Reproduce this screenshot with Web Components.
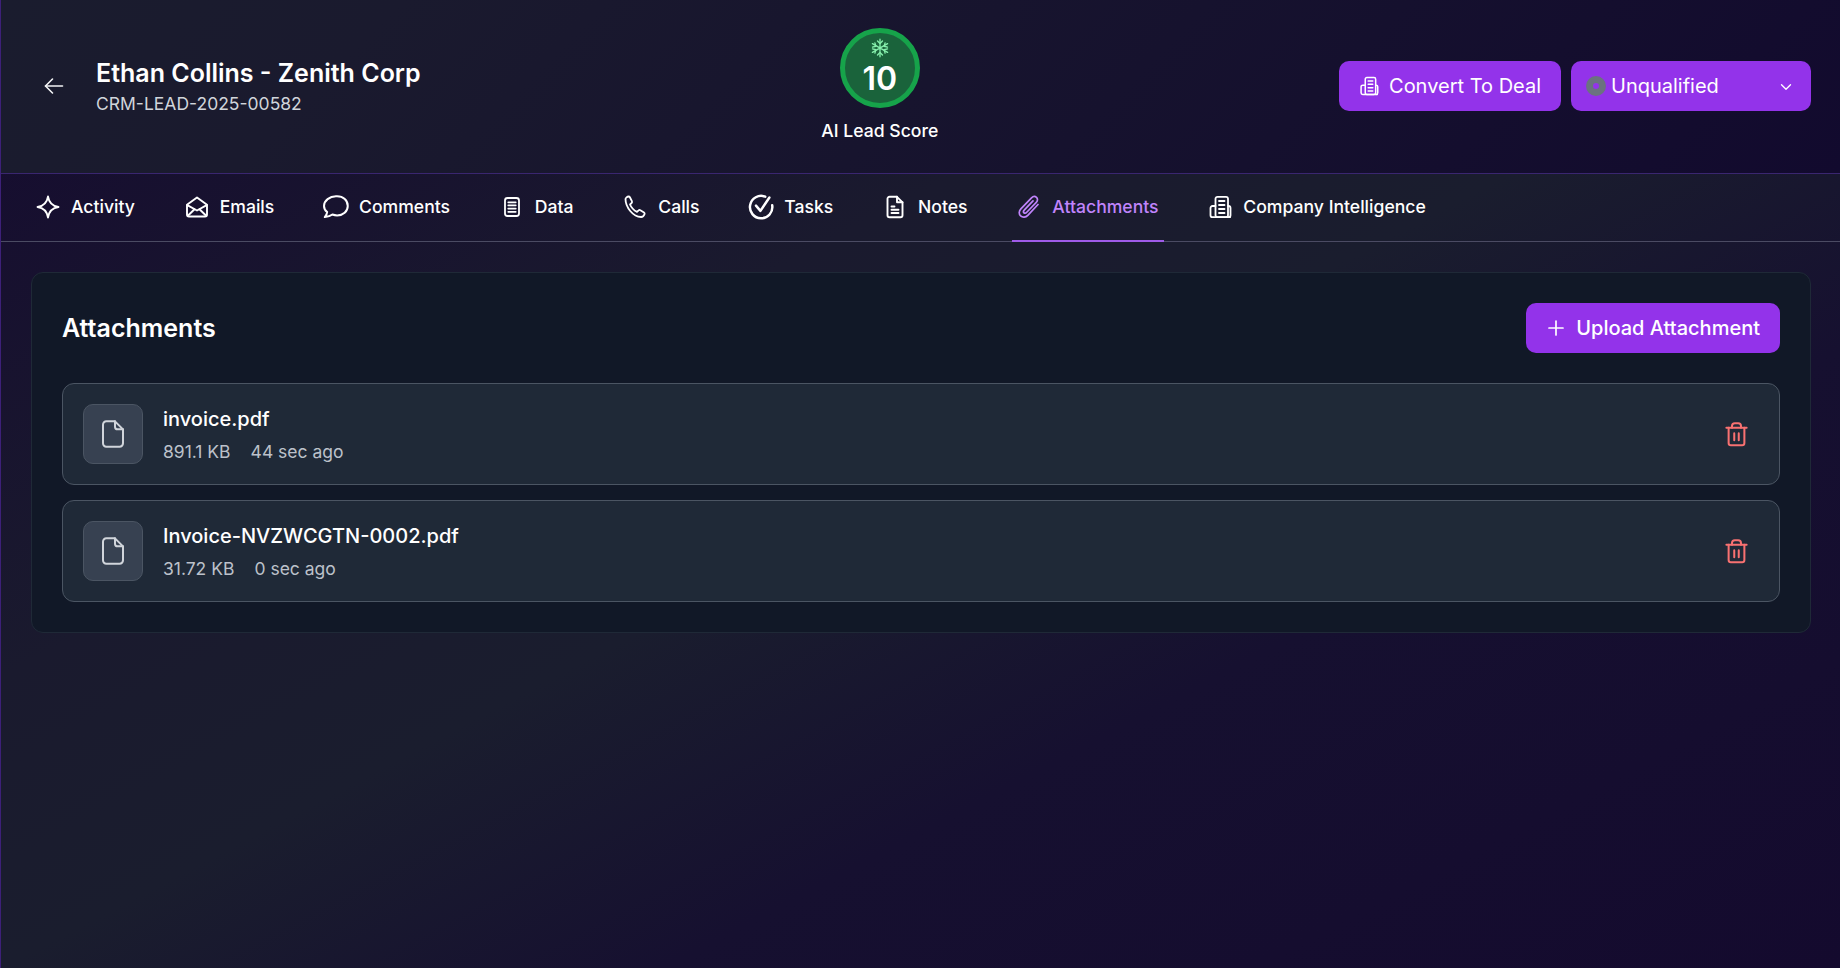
<!DOCTYPE html>
<html>
<head>
<meta charset="utf-8">
<title>Lead</title>
<style>
html, body { margin: 0; height: 100%; }
body {
    font-family: Inter, "Liberation Sans", sans-serif;
    color: #fff;
    background: linear-gradient(to bottom right, #150a30 0%, #1a1a2e 35%, #1a1d2e 50%, #161030 68%, #140a2e 100%);
}
</style>
</head>
<body>
<lead-page>
    <lead-header slot="header" name="Ethan Collins - Zenith Corp" code="CRM-LEAD-2025-00582" score="10"></lead-header>
    <tab-bar slot="tabs">
        <tab-item icon="activity">Activity</tab-item>
        <tab-item icon="mail">Emails</tab-item>
        <tab-item icon="comment">Comments</tab-item>
        <tab-item icon="data">Data</tab-item>
        <tab-item icon="phone">Calls</tab-item>
        <tab-item icon="task">Tasks</tab-item>
        <tab-item icon="note">Notes</tab-item>
        <tab-item icon="clip" active>Attachments</tab-item>
        <tab-item icon="company">Company Intelligence</tab-item>
    </tab-bar>
    <attachments-panel>
        <file-row name="invoice.pdf" size="891.1 KB" age="44 sec ago"></file-row>
        <file-row name="Invoice-NVZWCGTN-0002.pdf" size="31.72 KB" age="0 sec ago"></file-row>
    </attachments-panel>
</lead-page>

<script>
const stroke = (body, w) => `<svg viewBox="0 0 24 24" width="100%" height="100%" fill="none" stroke="currentColor" stroke-width="${w || 1.8}" stroke-linecap="round" stroke-linejoin="round">${body}</svg>`

const ICONS = {
    back: stroke('<path d="M20.500 12H3.500"/><path d="M10.500 5l-7 7 7 7"/>', 1.6),
    activity: stroke('<path d="M12 1.500c1 6.500 4 9.500 10.500 10.500-6.500 1-9.500 4-10.500 10.500-1-6.500-4-9.500-10.500-10.500 6.500-1 9.500-4 10.500-10.500z"/>', 1.8),
    mail: stroke('<path d="M2 9.800L12 2.500l10 7.300V19.500a2 2 0 0 1-2 2H4a2 2 0 0 1-2-2z"/><path d="M2.300 10.200L12 15.500l9.700-5.300"/><path d="M2.800 20.800l6.700-6.500M21.200 20.800l-6.700-6.500"/>', 1.9),
    comment: stroke('<path d="M13 2.500c5.500 0 9.500 3.700 9.500 8.500s-4.200 8.500-9.500 8.500c-1.500 0-2.900-.3-4.200-.8-1.800 1.400-4 2-6.800 2.300 1.300-1.500 2-2.900 2.100-4.500-1.800-1.500-2.800-3.500-2.800-5.500 0-4.800 5-8.500 10.700-8.500z"/>', 1.8),
    data: stroke('<rect x="5" y="3" width="14" height="18" rx="2.500"/><path d="M8.300 7.300h7.400M8.300 10.300h7.400M8.300 13.600h7.400M8.300 16.800h7.400"/>', 1.8),
    phone: stroke('<path d="M2.500 4c0-1 1.800-2.500 3-2.500.7 0 1.200.4 1.500 1l1.900 3.700c.3.600.2 1.300-.3 1.800L7 9.500c1.300 3 3.900 5.900 7 7.400l1.600-1.500c.5-.5 1.200-.6 1.800-.2l3.600 2.200c.6.400.8 1 .6 1.600-.5 1.500-1.900 3-3.500 3C10 22 2.500 12 2.500 4z"/>', 1.8),
    task: stroke('<path d="M15.800 2.800A10 10 0 1 0 22 10.500"/><path d="M7.500 10.800l4 4.700L19.500 3.500"/>', 2.200),
    note: stroke('<path d="M14 1.800H6.500A2 2 0 0 0 4.500 3.800v16.400a2 2 0 0 0 2 2h11a2 2 0 0 0 2-2V7.300z"/><path d="M14 1.800v5.500h5.500"/><path d="M8.500 11.500h3M8.500 14.800h7M8.500 18h7"/>', 1.9),
    clip: stroke('<path d="M21 9.500L10.800 20.300c-2.100 2.200-5.300 2.300-7.200.5-1.900-1.800-1.800-4.800.3-7L14.500 2.800c1.500-1.500 3.700-1.600 5-.4 1.400 1.300 1.300 3.500-.2 5L9.500 17.500c-.8.800-1.900.9-2.500.3-.7-.7-.6-1.800.2-2.600L16 5.900"/>', 1.7),
    company: stroke('<rect x="7.500" y="1.800" width="12.500" height="20.400" rx="2"/><path d="M7.500 11H4.500a2 2 0 0 0-2 2v7.200a2 2 0 0 0 2 2H22"/><path d="M11 6h5.500M11 10h5.500M11 14h5.500M11 18h5.500"/><path d="M20 11h.5a2 2 0 0 1 2 2v7.200a2 2 0 0 1-2 2"/>', 1.8),
    plus: stroke('<path d="M12 5v14M5 12h14"/>', 1.7),
    file: stroke('<path d="M13.500 2.500H7A2.500 2.500 0 0 0 4.500 5v14A2.500 2.500 0 0 0 7 21.500h10a2.500 2.500 0 0 0 2.500-2.500V8.500z"/><path d="M13.500 2.500v4a2 2 0 0 0 2 2h4"/>', 1.5),
    trash: stroke('<path d="M3 6h18"/><path d="M5 6v13.500A2 2 0 0 0 7 21.500h10a2 2 0 0 0 2-2V6"/><path d="M8 6V4.500A2.500 2.500 0 0 1 10.500 2h3A2.500 2.500 0 0 1 16 4.500V6"/><path d="M10 11v6M14 11v6"/>', 1.8),
    chevron: stroke('<path d="M6 9l6 6 6-6"/>', 1.8),
    snow: stroke('<path d="M12 1.500v21M2.900 6.800l18.200 10.400M21.100 6.800L2.900 17.200"/><path d="M9 3.500L12 6.500l3-3M9 20.500L12 17.500l3 3M3 11l4-1.100-1.100-4M21 13l-4 1.100 1.100 4M21 11l-4-1.100 1.100-4M3 13l4 1.100-1.100 4"/>', 1.600)
}

class LeadPage extends HTMLElement {
    constructor() {
        super()
        this.attachShadow({ mode: 'open' }).innerHTML = `
<style>
:host {
    display: flex;
    flex-direction: column;
    min-height: 100vh;
    box-sizing: border-box;
    border-left: 1px solid #3d2078;
}
main { padding: 30px 29px 0 30px; }
</style>
<slot name="header"></slot>
<slot name="tabs"></slot>
<main><slot></slot></main>`
    }
}
customElements.define('lead-page', LeadPage)

class UiButton extends HTMLElement {
    constructor() {
        super()
        this.attachShadow({ mode: 'open' }).innerHTML = `
<style>
:host {
    display: inline-flex;
    align-items: center;
    height: 50px;
    box-sizing: border-box;
    background: #9333ea;
    border-radius: 10px;
    font-size: 20px;
    font-weight: 400;
    color: #fff;
}
</style>
<slot></slot>`
    }
}
customElements.define('ui-button', UiButton)

class LeadHeader extends HTMLElement {
    constructor() {
        super()
        const name = this.getAttribute('name')
        const code = this.getAttribute('code')
        const score = this.getAttribute('score')
        this.attachShadow({ mode: 'open' }).innerHTML = `
<style>
:host {
    display: flex;
    justify-content: space-between;
    align-items: center;
    height: 174px;
    box-sizing: border-box;
    padding: 0 29px 0 41px;
    background: linear-gradient(135deg, #1a1c2e 0%, #1a1a2e 20%, #120a2e 100%);
    border-bottom: 1px solid #3a2670;
}
.left { display: flex; align-items: center; margin-top: 1px; }
.back { width: 24px; height: 24px; margin-right: 30px; margin-top: -2px; color: #f3f4f6; }
h1 { margin: 0; font-size: 25px; line-height: 32px; font-weight: 600; margin-top: -1px; }
.code { font-size: 17.500px; line-height: 24px; color: #d1d5db; margin-top: 3px; }
.score { display: flex; flex-direction: column; align-items: center; margin-top: -2px; }
.ring {
    width: 80px; height: 80px; box-sizing: border-box;
    border: 5px solid #16a34a; border-radius: 50%;
    background: #1a633b;
    display: flex; flex-direction: column; align-items: center; justify-content: center;
}
.snow { width: 20px; height: 20px; color: #86efac; margin-top: -3px; }
.num { font-size: 32px; line-height: 32px; font-weight: 600; margin-top: 5px; }
.label { font-size: 17.600px; line-height: 24px; font-weight: 500; margin-top: 11px; }
.right { display: flex; justify-content: flex-end; gap: 10px; margin-top: -1px; }
.convert { padding: 0 20px; gap: 10px; }
.ico { width: 20px; height: 20px; display: block; }
.status { width: 240px; padding: 0 16px 0 15px; }
.dot { width: 20px; height: 20px; border-radius: 50%; box-sizing: border-box; border: 7px solid #6b7280; margin-right: 5px; }
.chev { width: 18px; height: 18px; margin-left: auto; }
</style>
<div class="left">
    <div class="back">${ICONS.back}</div>
    <div>
        <h1>${name}</h1>
        <div class="code">${code}</div>
    </div>
</div>
<div class="score">
    <div class="ring">
        <div class="snow">${ICONS.snow}</div>
        <div class="num">${score}</div>
    </div>
    <div class="label">AI Lead Score</div>
</div>
<div class="right">
    <ui-button class="convert"><span class="ico">${ICONS.company}</span>Convert To Deal</ui-button>
    <ui-button class="status"><span class="dot"></span>Unqualified<span class="chev">${ICONS.chevron}</span></ui-button>
</div>`
    }
}
customElements.define('lead-header', LeadHeader)

class TabBar extends HTMLElement {
    constructor() {
        super()
        this.attachShadow({ mode: 'open' }).innerHTML = `
<style>
:host {
    display: flex;
    gap: 39.750px;
    height: 68px;
    box-sizing: border-box;
    padding: 0 30px;
    border-bottom: 1px solid #4b4b63;
}
</style>
<slot></slot>`
    }
}
customElements.define('tab-bar', TabBar)

class TabItem extends HTMLElement {
    constructor() {
        super()
        const icon = this.getAttribute('icon')
        this.attachShadow({ mode: 'open' }).innerHTML = `
<style>
:host {
    display: flex;
    align-items: center;
    gap: 11px;
    padding: 0 5px 1px 5px;
    font-size: 17.600px;
    font-weight: 500;
    color: #fff;
    box-sizing: border-box;
    height: 68px;
    border-bottom: 2px solid transparent;
}
:host([active]) { color: #c084fc; border-bottom-color: #9f5be8; }
:host([icon="task"]) .ico, :host([icon="comment"]) .ico { transform: scale(1.12); }
.ico { width: 24px; height: 24px; display: block; }
</style>
<span class="ico">${ICONS[icon]}</span><slot></slot>`
    }
}
customElements.define('tab-item', TabItem)

class AttachmentsPanel extends HTMLElement {
    constructor() {
        super()
        this.attachShadow({ mode: 'open' }).innerHTML = `
<style>
:host {
    display: block;
    box-sizing: border-box;
    background: #111827;
    border: 1px solid #1f2937;
    border-radius: 12px;
    padding: 30px;
}
.top { display: flex; justify-content: space-between; align-items: center; margin-bottom: 30px; }
h2 { margin: 0; font-size: 25px; font-weight: 600; line-height: 32px; }
.list { display: flex; flex-direction: column; gap: 15px; }
.up { padding: 0 20px 0 18px; gap: 8px; font-weight: 500; }
.ico { width: 24px; height: 24px; }
</style>
<div class="top">
    <h2>Attachments</h2>
    <ui-button class="up"><span class="ico">${ICONS.plus}</span>Upload Attachment</ui-button>
</div>
<div class="list"><slot></slot></div>`
    }
}
customElements.define('attachments-panel', AttachmentsPanel)

class FileRow extends HTMLElement {
    constructor() {
        super()
        this.attachShadow({ mode: 'open' }).innerHTML = `
<style>
:host {
    display: flex;
    align-items: center;
    gap: 20px;
    height: 102px;
    box-sizing: border-box;
    padding: 0 29px 0 20px;
    background: #1f2937;
    border: 1px solid #4b5563;
    border-radius: 12px;
}
.box {
    width: 60px; height: 60px; box-sizing: border-box;
    background: #374151; border: 1px solid #4b5563; border-radius: 10px;
    display: flex; align-items: center; justify-content: center;
    color: #d1d5db;
}
.box span { width: 32px; height: 32px; display: block; }
.info { flex: 1; margin-top: 1px; }
.name { font-size: 20px; line-height: 28px; font-weight: 500; }
.meta { display: flex; gap: 20px; font-size: 17.500px; line-height: 24px; color: #bcc1ca; margin-top: 7px; }
.del { width: 27px; height: 27px; color: #f87171; }
</style>
<div class="box"><span>${ICONS.file}</span></div>
<div class="info">
    <div class="name">${this.getAttribute('name')}</div>
    <div class="meta"><span>${this.getAttribute('size')}</span><span>${this.getAttribute('age')}</span></div>
</div>
<div class="del">${ICONS.trash}</div>`
    }
}
customElements.define('file-row', FileRow)
</script>
</body>
</html>
